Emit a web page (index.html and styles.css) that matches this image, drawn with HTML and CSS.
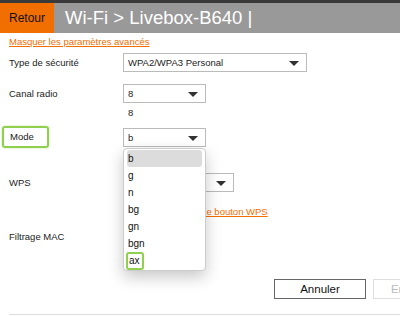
FILE: index.html
```html
<!DOCTYPE html>
<html lang="fr">
<head>
    <meta charset="UTF-8">
    <meta name="viewport" content="width=device-width, initial-scale=1.0">
    <title>Wi-Fi > Livebox-B640</title>
    <link rel="stylesheet" href="styles.css">
</head>
<body>
    <div class="header">
        <div class="back-button">Retour</div>
        <div class="title">Wi-Fi &gt; Livebox-B640 |</div>
    </div>

    <div class="content">
        <a class="link" href="#">Masquer les paramètres avancés</a>

        <div class="form-row first">
            <div class="label">Type de sécurité</div>
            <div class="select wide">WPA2/WPA3 Personal</div>
        </div>

        <div class="form-row">
            <div class="label">Canal radio</div>
            <div class="select">8</div>
        </div>
        <div class="note">8</div>

        <div class="form-row mode-row">
            <div class="label highlight">Mode</div>
            <div class="select-wrap">
                <div class="select">b</div>
                <ul class="dropdown">
                    <li class="selected">b</li>
                    <li>g</li>
                    <li>n</li>
                    <li>bg</li>
                    <li>gn</li>
                    <li>bgn</li>
                    <li><span class="highlight-item">ax</span></li>
                </ul>
            </div>
        </div>

        <div class="form-row wps-row">
            <div class="label">WPS</div>
            <div class="select medium">Activé</div>
        </div>
        <a class="link wps-link" href="#">Se connecter avec le bouton WPS</a>

        <div class="form-row mac-row">
            <div class="label">Filtrage MAC</div>
            <div class="select">Désactivé</div>
        </div>

        <div class="buttons">
            <button class="button">Annuler</button>
            <button class="button disabled">Enregistrer</button>
        </div>
        <div class="footer-line"></div>
    </div>
</body>
</html>
```

FILE: styles.css
```css
body {
    margin: 0;
    font-family: "Liberation Sans", Arial, sans-serif;
    background-color: #fff;
    color: #222;
    overflow: hidden;
}

.header {
    display: flex;
    height: 30px;
    border-top: 3px solid #3a3a3a;
    background-color: #999;
}

.back-button {
    width: 54px;
    background-color: #f16e00;
    color: #111;
    font-size: 12px;
    display: flex;
    align-items: center;
    justify-content: center;
}

.title {
    color: #fff;
    font-size: 18.5px;
    line-height: 30px;
    padding-left: 11px;
    white-space: nowrap;
}

.content {
    padding-left: 9px;
}

.link {
    display: block;
    color: #f16e00;
    font-size: 9.5px;
    line-height: 12px;
    margin-top: 3px;
    text-decoration: underline;
    white-space: nowrap;
}

.form-row {
    display: grid;
    grid-template-columns: 114px auto;
    align-items: center;
    margin-top: 12px;
}

.form-row.first {
    margin-top: 5px;
}

.label {
    font-size: 9.5px;
    color: #222;
}

.select {
    position: relative;
    box-sizing: border-box;
    width: 83px;
    height: 19px;
    border: 1px solid #bbb;
    font-size: 9.5px;
    line-height: 17px;
    padding-left: 4px;
    color: #222;
    white-space: nowrap;
}

.select::after {
    content: "";
    position: absolute;
    right: 7px;
    top: 7px;
    border-left: 5px solid transparent;
    border-right: 5px solid transparent;
    border-top: 5px solid #333;
}

.select.wide {
    width: 184px;
}

.select.medium {
    width: 111px;
}

.note {
    font-size: 9.5px;
    line-height: 10px;
    margin: 5px 0 0 119px;
}

.mode-row {
    margin-top: 8px;
    height: 22px;
}

.highlight {
    box-sizing: border-box;
    width: 47px;
    height: 22px;
    margin-left: -7px;
    padding-left: 6px;
    line-height: 18px;
    border: 2px solid #8fd14f;
    border-radius: 3px;
    box-shadow: 0 0 2px rgba(143, 209, 79, 0.6);
}

.select-wrap {
    position: relative;
    z-index: 2;
}

.dropdown {
    position: absolute;
    top: 20px;
    left: 0;
    width: 83px;
    box-sizing: border-box;
    margin: 0;
    padding: 1px 3px 1px 3px;
    list-style: none;
    background-color: #fff;
    border: 1px solid #ccc;
    border-radius: 4px;
    box-shadow: 0 6px 16px rgba(0, 0, 0, 0.22);
}

.dropdown li {
    height: 17px;
    line-height: 17px;
    font-size: 10px;
    padding-left: 1px;
    color: #111;
    border-radius: 3px;
}

.dropdown li.selected {
    background-color: #dcdcdc;
}

.highlight-item {
    display: inline-block;
    box-sizing: border-box;
    height: 18px;
    line-height: 14px;
    padding: 0 2px 0 1px;
    margin-left: -2px;
    border: 2px solid #8fd14f;
    border-radius: 3px;
}

.wps-row {
    margin-top: 25px;
}

.wps-link {
    margin: 14px 0 0 114px;
}

.mac-row {
    margin-top: 9px;
}

.buttons {
    display: flex;
    gap: 7px;
    margin-top: 33px;
    margin-left: 265px;
}

.button {
    flex-shrink: 0;
    box-sizing: border-box;
    width: 92px;
    height: 20px;
    background-color: #fff;
    border: 1px solid #666;
    font-family: "Liberation Sans", Arial, sans-serif;
    font-size: 11.5px;
    color: #111;
    padding: 0;
}

.button.disabled {
    border-color: #ddd;
    color: #bbb;
}

.footer-line {
    margin-top: 15px;
    border-top: 1px solid #ddd;
}
```
